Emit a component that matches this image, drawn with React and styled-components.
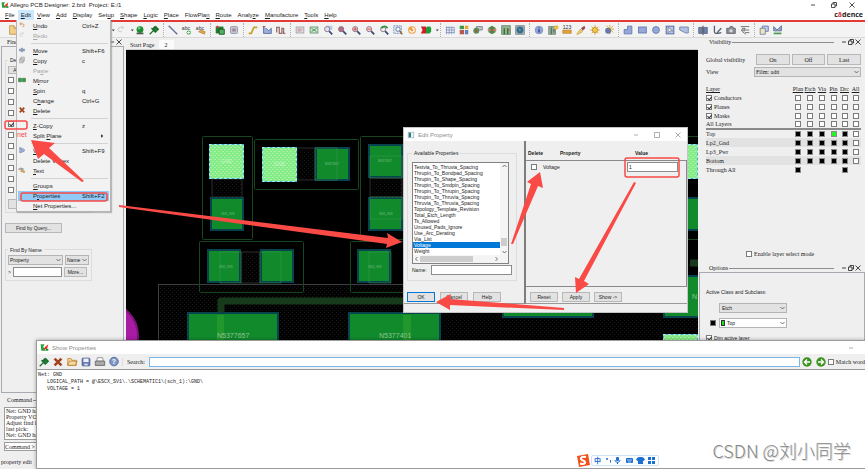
import React, { useState } from 'react'
import styled, { createGlobalStyle, css } from 'styled-components'

const GlobalStyle = createGlobalStyle`
  * { box-sizing: border-box; }
  body {
    margin: 0;
    background: #efeff0;
    overflow: hidden;
  }
  button, input, select { font: inherit; color: inherit; margin: 0; padding: 0; border-radius: 0; outline: 0; }
`

const ui = css`
  font-family: "Liberation Sans", Arial, sans-serif;
  font-size: 6px;
  line-height: 8px;
`
const form = css`
  font-family: "Liberation Sans", Arial, sans-serif;
  font-size: 5px;
  line-height: 6px;
`
const dock = css`
  font-family: "Liberation Serif", serif;
  font-size: 6px;
  line-height: 8px;
`

const Desktop = styled.div`
  position: relative;
  display: flex;
  flex-direction: column;
  height: 100vh;
  overflow: hidden;
  background: #efeff0;
  color: #1c1c1c;
  ${ui}
`
const TitleBar = styled.header`
  display: flex;
  align-items: center;
  gap: 1px;
  height: 10px;
  flex: none;
  padding: 0 6px 0 1px;
  background: #fff;
`
const Title = styled.h1`
  flex: 1;
  margin: 0;
  font-size: 6px;
  font-weight: 400;
  white-space: pre;
`
const WinButton = styled.button`
  display: grid;
  place-items: center;
  width: ${({ $w }) => $w || 20}px;
  height: 8px;
  border: 0;
  background: none;
  color: ${({ $faint }) => ($faint ? '#9a9a9a' : '#222')};
`
const MenuBar = styled.nav`
  display: flex;
  align-items: center;
  height: 10px;
  flex: none;
  padding-left: 2px;
  background: #fff;
`
const MenuButton = styled.button`
  height: 10px;
  padding: 0 3px;
  border: 0;
  background: ${({ $open }) => ($open ? '#cce8ff' : 'none')};
`
const Brand = styled.div`
  margin-left: auto;
  padding-right: 2px;
  font-family: "Open Sans", sans-serif;
  font-size: 7px;
  font-weight: 700;
  i { font-style: normal; color: #d33; }
`
const ToolBar = styled.div`
  display: flex;
  align-items: center;
  height: 18px;
  flex: none;
  padding: 0 6px;
  border-top: 2px solid #e23b36;
  border-bottom: 1px solid #dadada;
  background: #f3f3f3;
`
const ToolGroup = styled.div`
  display: flex;
  align-items: center;
  & + & { margin-left: 2px; padding-left: 2px; border-left: 1px dotted #b0b0b0; }
`
const ToolButton = styled.button`
  display: grid;
  place-items: center;
  width: ${({ $narrow }) => ($narrow ? 5 : 14)}px;
  height: 14px;
  border: 0;
  background: none;
`
const Body = styled.main`
  display: grid;
  grid-template-columns: 126px 1fr 167px;
  flex: 1;
  min-height: 0;
`
const Dock = styled.section`
  display: flex;
  flex-direction: column;
  min-height: 0;
  min-width: 0;
`
const DockHeader = styled.div`
  display: flex;
  align-items: center;
  gap: 1px;
  height: 8px;
  padding: 0 4px 0 ${({ $left }) => $left || 8}px;
  ${dock}
  hr { flex: 1; border: 0; border-top: 1px solid #8d8d8d; margin: 0 6px 0 0; }
`
const Frame = styled.div`
  display: flex;
  flex-direction: column;
  align-items: flex-start;
  flex: 1;
  margin: 0 ${({ $right }) => $right || 0}px 0 1px;
  padding: ${({ $pad }) => $pad || '10px 3px 0'};
  border: 1px solid #a9a9b2;
  ${form}
`
const Group = styled.fieldset`
  width: 86px;
  margin: 0;
  padding: 2px 2px 3px;
  border: 1px solid #dcdcdc;
  legend { padding: 0 2px; height: 6px; }
`
const Row = styled.div`
  display: flex;
  align-items: center;
  gap: ${({ $gap }) => $gap || 0}px;
  height: ${({ $h }) => $h || 9}px;
  margin-top: ${({ $mt }) => $mt || 0}px;
`
const Button = styled.button`
  width: ${({ $w }) => $w}px;
  height: ${({ $h }) => $h || 10}px;
  flex: ${({ $grow }) => ($grow ? 1 : 'none')};
  border: 1px solid ${({ $primary }) => ($primary ? '#0078d7' : '#b8b8b8')};
  background: #e2e2e2;
  white-space: nowrap;
`
const TextBox = styled.input`
  width: ${({ $w }) => $w}px;
  height: ${({ $h }) => $h || 9}px;
  flex: ${({ $grow }) => ($grow ? 1 : 'none')};
  min-width: 0;
  padding: 0 1px;
  border: 1px solid ${({ $blue }) => ($blue ? '#7ab8ea' : '#8c8c8c')};
  background: #fff;
`
const Tick = styled.input.attrs({ type: 'checkbox' })`
  appearance: none;
  display: inline-block;
  position: relative;
  flex: none;
  width: 6px;
  height: 6px;
  vertical-align: middle;
  border: 1px solid #7b7b7b;
  background: #fff;
  &:checked::after {
    content: '';
    position: absolute;
    left: 1px;
    top: 0;
    width: 2px;
    height: 3px;
    border: solid #333;
    border-width: 0 1px 1px 0;
    transform: rotate(40deg);
  }
`
const Swatch = styled(Tick)`
  border-color: #8c8c8c;
  background: ${({ $color }) => $color};
  &:checked::after { display: none; }
`
const TickLabel = styled.label`
  display: flex;
  align-items: center;
  gap: 2px;
  height: ${({ $h }) => $h || 11}px;
  white-space: nowrap;
`
const SelectWrap = styled.span`
  position: relative;
  display: block;
  width: ${({ $w }) => $w}px;
  height: 10px;
  flex: ${({ $w }) => ($w ? 'none' : 1)};
  select {
    appearance: none;
    display: block;
    width: 100%;
    height: 100%;
    padding-left: ${({ $inset }) => $inset || 1}px;
    border: 1px solid #b4b4b4;
    background: ${({ $white }) => ($white ? '#fff' : '#e2e2e2')};
  }
  svg { position: absolute; right: 2px; top: 3px; pointer-events: none; }
`
const ColorChip = styled.i`
  position: absolute;
  left: 2px;
  top: 2px;
  width: 4px;
  height: 6px;
  border: 1px solid #333;
  background: #1fdc1f;
`
const BlackChip = styled.i`
  width: 6px;
  height: 6px;
  border: 1px solid #777;
  background: #000;
`
const Tabs = styled.div`
  display: flex;
  align-items: flex-end;
  height: 12px;
  flex: none;
  border-bottom: 1px solid #cfcfcf;
  ${dock}
`
const Tab = styled.button`
  height: 9px;
  padding: 0 ${({ $active }) => ($active ? 6 : 4)}px;
  border: 0;
  background: ${({ $active }) => ($active ? '#fbfbfb' : 'none')};
`
const Canvas = styled.svg`
  display: block;
  width: 100%;
  flex: 1;
  min-height: 0;
  background: #000;
`
const Visibility = styled.div`
  display: flex;
  flex-direction: column;
  flex: 0 0 218px;
  padding: 8px 4px 6px 8px;
  ${dock}
  button, select { line-height: 6px; }
`
const GlobalLabel = styled.span`
  width: 48px;
  white-space: nowrap;
`
const LayerTable = styled.table`
  table-layout: fixed;
  width: 100%;
  margin-top: 8px;
  border-collapse: collapse;
  line-height: 8px;
  th, td { height: 9px; padding: 0; text-align: center; line-height: 6px; font-weight: 400; }
  thead th { height: 8px; text-decoration: underline; }
  th:first-child { text-align: left; }
  tbody + tbody tr:first-child > * { border-top: 2px solid #8a8a8a; }
  tbody + tbody tr:nth-child(even) { background: #e2e2e2; }
  label { display: flex; align-items: center; gap: 2px; }
`
const Col = styled.col`
  width: ${({ $w }) => $w}px;
`
const LayerMode = styled.div`
  margin-top: auto;
  padding-left: 40px;
`
const CommandDock = styled.section`
  flex: none;
  height: 76px;
  padding: 3px 0 0 4px;
  ${dock}
`
const CommandLog = styled.div`
  height: 33px;
  margin-top: 3px;
  padding: 0 1px;
  border: 1px solid #9d9d9d;
  background: #fff;
  line-height: 6px;
  overflow: hidden;
  p { margin: 0; white-space: nowrap; }
`
const CommandLine = styled.label`
  display: flex;
  align-items: center;
  height: 9px;
  margin-top: 2px;
  border: 1px solid #9d9d9d;
  background: #fff;
  white-space: pre;
  input { flex: 1; height: 7px; border: 0; border-left: 1px solid #777; background: none; }
`
const Status = styled.p`
  margin: 7px 0 0 -3px;
`
const Menu = styled.ul`
  position: absolute;
  left: 16px;
  top: 20px;
  width: 95px;
  margin: 0;
  padding: 1px 1px 0;
  list-style: none;
  border: 1px solid #b5b5b5;
  border-top: 0;
  background: #f2f2f2;
  box-shadow: 1px 1px 1px #8888;
`
const MenuItem = styled.li`
  button {
    display: grid;
    grid-template-columns: 15px 49px 1fr;
    align-items: center;
    width: 100%;
    height: 10px;
    border: 0;
    text-align: left;
    white-space: nowrap;
    color: ${({ $off }) => ($off ? '#a5a5a5' : '#1c1c1c')};
    background: ${({ $hot }) => ($hot ? '#91c9f7' : 'none')};
  }
`
const MenuKeys = styled.span`
  display: flex;
  align-items: center;
  justify-content: ${({ $sub }) => ($sub ? 'flex-end' : 'flex-start')};
  padding-right: ${({ $sub }) => ($sub ? 4 : 0)}px;
`
const MenuRule = styled.li`
  height: 5px;
  padding: 2px 1px 0 13px;
  &::after { content: ''; display: block; border-top: 1px solid #d2d2d2; }
`
const Dialog = styled.section`
  position: absolute;
  left: 403px;
  top: 127px;
  width: 285px;
  background: #efefef;
  border: 1px solid #c4c4c4;
  ${form}
`
const DialogTitle = styled.header`
  display: flex;
  align-items: center;
  gap: 3px;
  height: 13px;
  padding: 0 0 0 3px;
  background: #fff;
  color: #8c8c8c;
  ${ui}
  span { flex: 1; }
`
const Panes = styled.div`
  display: grid;
  grid-template-columns: 120px 1fr;
`
const Pane = styled.div`
  height: 163px;
  padding: ${({ $pad }) => $pad};
  border-left: ${({ $line }) => ($line ? '2px solid #7d7d7d' : 0)};
  border-bottom: 1px solid #999;
`
const PropertyGroup = styled(Group)`
  width: 110px;
  height: 131px;
  padding: 6px 4px;
`
const ListBox = styled.div`
  display: grid;
  grid-template-columns: 1fr 8px;
  grid-template-rows: 92px 8px;
  width: 97px;
  border: 1px solid #828282;
  background: #fff;
`
const Options = styled.ul`
  margin: 0;
  padding: 1px 0;
  list-style: none;
  overflow: hidden;
  li { padding-left: 1px; white-space: nowrap; }
  li[aria-selected='true'] { background: #0078d7; color: #fff; }
`
const ScrollTrack = styled.div`
  display: flex;
  flex-direction: ${({ $down }) => ($down ? 'column' : 'row')};
  align-items: center;
  justify-content: space-between;
  padding: 1px;
  background: #f4f4f4;
`
const Thumb = styled.i`
  width: ${({ $w }) => $w}px;
  height: ${({ $h }) => $h}px;
  margin: ${({ $m }) => $m || 0};
  background: #cdcdcd;
`
const ValueHead = styled.div`
  display: grid;
  grid-template-columns: 32px 75px 1fr;
  height: 19px;
  padding: 9px 2px 0;
  font-weight: 700;
`
const ValueArea = styled.div`
  height: 127px;
  padding: 1px 8px 0 5px;
  border: 1px solid #8a8a8a;
  border-left: 0;
`
const ValueRow = styled.div`
  display: grid;
  grid-template-columns: 1fr 51px;
  align-items: center;
  height: 10px;
  label { display: flex; align-items: center; gap: 6px; }
`
const DialogFoot = styled.div`
  height: 8px;
`
const PropsWindow = styled.section`
  position: absolute;
  left: 36px;
  right: 0;
  top: 340px;
  bottom: 0;
  display: flex;
  flex-direction: column;
  overflow: hidden;
  border: 1px solid #9b9b9b;
  border-right: 0;
  background: #fff;
  box-shadow: 0 0 4px #0005;
`
const PropsBar = styled.div`
  display: flex;
  align-items: center;
  height: 16px;
  flex: none;
  border-bottom: 1px solid #9a9a9a;
  background: #efefef;
  overflow: hidden;
  ${dock}
  & > label { white-space: nowrap; }
`
const SearchLabel = styled.label`
  padding: 0 4px;
  margin-left: 1px;
  border-left: 1px solid #ddd;
`
const Report = styled.pre`
  margin: 0;
  padding: 2px 1px;
  font-family: "Liberation Mono", monospace;
  font-size: 5px;
  line-height: 7px;
`
const Marks = styled.svg`
  position: absolute;
  inset: 0;
  width: 100%;
  height: 100%;
  pointer-events: none;
`
const InputMethod = styled.div`
  position: absolute;
  left: 575px;
  bottom: 1px;
  display: flex;
  align-items: center;
  height: 15px;
`
const InputMethodBar = styled.div`
  display: flex;
  align-items: center;
  gap: 3px;
  height: 11px;
  padding: 0 2px;
  border: 1px solid #cfe2f5;
  border-radius: 2px;
  background: #fff;
  color: #1a6fd0;
  font: 700 7px/9px "Noto Sans CJK SC", sans-serif;
`
const Watermark = styled.div`
  position: absolute;
  right: 14px;
  bottom: 6px;
  color: #858585;
  text-shadow: 1px 1px 0 #d8d8d8;
  font: 300 18px/26px "Noto Sans CJK SC", sans-serif;
`

/* toolbar drawings, all on a 14 x 14 grid */
const lens = (fill) => (
  <>
    <path d="M8 8l4 4" stroke="#3c4a78" strokeWidth="2" />
    <circle cx="6" cy="6" r="3" fill={fill} stroke="#8a6a80" />
  </>
)
const frame = (fill, stroke) => <rect x="2.5" y="3.5" width="9" height="7" fill={fill} stroke={stroke} />
const pin = (
  <path d="M2 12l4-4M4 5l5 5M6 7l3-3M7 3l4 4M6 5l3-2 3 3-3 3z" stroke="#1d6f2c" strokeWidth="1.5" fill="#2f9a42" />
)
const art = {
  file: <path d="M3 2h5l3 3v7H3zM8 2v3h3" fill="#f3cf8c" stroke="#c69445" />,
  redo: <path d="M9 4H6a2.500 2.500 0 0 0 0 5h2M8 2l2 2-2 2" fill="none" stroke="#c3c3c3" />,
  undo: <path d="M4 5h4a2.500 2.500 0 0 1 0 5M6 2L3 5l3 2" fill="none" stroke="#d58a4c" strokeWidth="1.500" />,
  caret: <path d="M5 6h5l-2.500 3z" fill="#333" />,
  sub: <path d="M5 3l5 4-5 4z" fill="#222" />,
  ball: <><path d="M3 10h8v2H3z" fill="#555" /><circle cx="7" cy="6.500" r="4" fill="#1c8c30" /><circle cx="6" cy="5" r="1.500" fill="#6bd07a" /></>,
  pin,
  line: <path d="M2 2l10 10" stroke="#5c6a98" strokeWidth="1.500" />,
  abcAdd: <><text x="1" y="7" fontSize="6" fill="#333">abc</text><circle cx="9" cy="10" r="2.500" fill="#37a046" /><path d="M9 8v4M7 10h4" stroke="#fff" /></>,
  abcEdit: <><text x="1" y="7" fontSize="6" fill="#333">abc</text><path d="M4 9l7 3 1-3-5-2z" fill="#e2a33c" stroke="#8f6220" strokeWidth=".5" /></>,
  place: <><rect x="2" y="3" width="9" height="8" fill="#237d31" /><path d="M6 6h6v6H6z" fill="#55b063" stroke="#174d20" /><circle cx="4" cy="3.500" r="1.500" fill="#d53b32" /></>,
  gray: <><rect x="3" y="3" width="8" height="8" rx="1" fill="#c8ccd8" stroke="#8b8fa0" /><path d="M5 6h4M5 8h4" stroke="#7d4f60" /></>,
  step: <path d="M2 11h3l3-7h4" fill="none" stroke="#c2a429" strokeWidth="2" />,
  slide: <><path d="M3 3v8h9V5l-3 3-3-3" fill="#9bb0dc" stroke="#53699a" /><path d="M2 3h3" stroke="#b33" /></>,
  delay: <path d="M2 10V4h3v7h3V5h2v6h2" fill="none" stroke="#9a6b6b" strokeWidth="1.500" />,
  grid1: <>{frame('#e6dede', '#98a3ad')}<path d="M4 6h6M4 8h5M6 5v4" stroke="#c7949a" /></>,
  grid2: <>{frame('#d4ead7', '#5f8f6b')}<path d="M4 5l6 4M4 9l6-4" stroke="#3d8b4c" /></>,
  zoomFit: <><rect x="5" y="2" width="7" height="5" fill="#b7c7e6" />{lens('#dbe6f6')}</>,
  zoomBox: lens('#b06f86'),
  zoomIn: <>{lens('#f1dcdc')}<path d="M4 6h4M6 4v4" stroke="#c33" /></>,
  zoomOut: <>{lens('#f1dcdc')}<path d="M4 6h4" stroke="#c33" /></>,
  zoomPrev: <>{lens('#e9eef4')}<path d="M4 5c2-3 6-3 7 0" stroke="#2d9040" strokeWidth="2" fill="none" /></>,
  zoomSel: <><rect x="2" y="2" width="9" height="9" fill="#d8e4f2" stroke="#7f93ad" strokeDasharray="2 1" /><circle cx="7" cy="6" r="2.500" fill="#fff" stroke="#536fa5" /><path d="M9 8l3 4" stroke="#8a5a2c" strokeWidth="1.500" /></>,
  refresh: <><circle cx="7" cy="7" r="4.500" fill="#ef9f41" /><path d="M4.500 7A2.500 2.500 0 1 0 7 4.500" fill="none" stroke="#fff" strokeWidth="1.500" /></>,
  view3d: <><path d="M1 3h6v8H1l2-4z" fill="#cd1f25" /><path d="M7 4l2-1h3l1 2v4l-2 2H7z" fill="#1e9a37" /></>,
  mesh: <path d="M2 4h10M2 7h10M2 10h10M3 3v9M6 3v9M9 3v9M12 4v7" stroke="#8094bd" />,
  colors: <><path d="M2 2h5v4H2z" fill="#3a9a4a" /><path d="M8 2h4v4H8z" fill="#e6a834" /><path d="M2 7h5v5H2z" fill="#b9574c" /><path d="M8 7h4v5H8z" fill="#6780b8" /></>,
  shadow: <><path d="M5 3h7v4H5z" fill="#c0c4ca" stroke="#7b8088" /><circle cx="5" cy="8" r="3.500" fill="#5d8d54" /><circle cx="5" cy="8" r="1" fill="#c33" /></>,
  layers: <><path d="M2 9l5-2 5 2-5 3zM2 5l5-3 5 3-5 2z" fill="#4d8a46" /><path d="M2 7h10" stroke="#a5432f" strokeWidth="1.500" /></>,
  section: <><rect x="2" y="2" width="10" height="10" fill="#93b594" stroke="#6d806f" /><path d="M5 5v7M9 5v7" stroke="#28702f" strokeWidth="1.500" /><path d="M8 7h3" stroke="#c33" /></>,
  world: <><rect x="2" y="2" width="10" height="10" fill="#a7b3ad" stroke="#7b8b8b" /><circle cx="7" cy="7" r="4" fill="#39689b" /><path d="M5 5l3 1-1 3z" fill="#5fb360" /></>,
  info: <><circle cx="7" cy="7" r="4.500" fill="#91a4da" stroke="#8393bf" /><path d="M7 4v1M7 6v4" stroke="#263875" strokeWidth="1.500" /></>,
  dimension: <><rect x="2" y="3" width="8" height="9" fill="#98a99b" stroke="#7b8a7e" /><path d="M5 4v8M8 6v4" stroke="#385f3c" /><circle cx="11" cy="4" r="2.500" fill="#efbd37" /></>,
  ruler: <><text x="2" y="6" fontSize="6" fill="#333">123</text><path d="M2 7h10v4H2z" fill="#e2a13b" stroke="#a46d1b" strokeWidth=".5" /></>,
  brush: <><path d="M2 12l4-6 3 3-5 3z" fill="#f0cf54" stroke="#9b8433" strokeWidth=".5" /><path d="M7 5l4-3 1 3-3 3z" fill="#96455b" /></>,
  sun: <><path d="M7 1v12M1 7h12M3 3l8 8M11 3l-8 8" stroke="#dba22b" /><circle cx="7" cy="7" r="3" fill="#f7c94b" stroke="#b98a22" /></>,
  dim: <><path d="M8 1v11M3 6h10M4 2l8 8M12 2l-8 8" stroke="#dba22b" /><circle cx="8" cy="6" r="2" fill="#f7c94b" /><circle cx="6" cy="8" r="3.500" fill="#6879a8" /></>,
  poly: <path d="M2.500 11.500v-5h4v-4h5v9z" fill="#95a8d6" stroke="#6177af" />,
  rect: <rect x="3" y="3.500" width="9" height="7" fill="#95a8d6" stroke="#6177af" />,
  circle: <circle cx="7" cy="7" r="4" fill="#95a8d6" stroke="#6177af" />,
  pick: <><rect x="2.500" y="2.500" width="9" height="9" fill="#b5c4e8" stroke="#4c5f93" /><path d="M5 4v6l2-2 3 0z" fill="#fff" stroke="#334" strokeWidth=".5" /></>,
  cut: <><path d="M2 3.500h10v7H9L2 7z" fill="#b1bfdf" stroke="#6e81ae" /></>,
  flipH: <><path d="M2 4h4v7H2zM8 4h4v7H8z" fill="#7083b1" stroke="#59658a" /><path d="M7 2v11" stroke="#222" /></>,
  drill: <path d="M4 2v7a2 2 0 0 0 4 0l4-4M8 11l4-1" fill="none" stroke="#555e70" strokeWidth="1.500" />,
  camera: <><path d="M2 5h3l1-2h3l1 2h2v6H2z" fill="#8b8f97" stroke="#666" /><circle cx="7" cy="8" r="2" fill="#d7dce4" /></>,
  net: <path d="M2 3h10M4 5h3v3H3zM8 7h4M7 10h5M4 9l4 3" fill="#bbb" stroke="#666" />,
  copy3: <><path d="M5 2.500h7v6H5z" fill="#c2cdec" stroke="#5f72a8" /><path d="M2.500 5h6v7h-6z" fill="#f0e5b5" stroke="#7381a6" /></>,
  wave: <><path d="M2 3l4 4 5-5v6H2z" fill="#8fa2c8" stroke="#5e7093" /><path d="M2 11h9" stroke="#4e9954" strokeWidth="2" /></>,
  move: <path d="M7 2l2 3h3v4H9l-2 3-2-3H2V5h3z" fill="#8b9ab8" />,
  copy: <path d="M5 2h6v7H5zM3 5h6v7H3z" fill="#e3e5e9" stroke="#888" />,
  mirror: <path d="M1 4h5v6H1zM8 4h5v6H8zM6 7h2" fill="#3d9b45" stroke="#28712f" />,
  cross: <path d="M3 3l8 8M11 3l-8 8" stroke="#a3421c" strokeWidth="3" />,
  vertex: <path d="M3 2v10M4 3l7 3v3l-7 3V9l3-2-3-1z" stroke="#6477a5" fill="#a9b7d8" />,
  folder: <path d="M2 11V3h4l1 2h5v6zM2 11l2-5h9l-2 5z" fill="#f6d9a0" stroke="#c28a3c" />,
  save: <><rect x="2.500" y="2.500" width="9" height="9" rx="1" fill="#6a7fb4" stroke="#44568a" /><path d="M4 3h6v4H4z" fill="#eef" /><path d="M5 9h4v2H5z" fill="#dde" /></>,
  print: <><path d="M4 2h6l1 4H3z" fill="#fff" stroke="#888" /><path d="M1.500 6h11v5h-11z" fill="#aaa" stroke="#666" /></>,
  help: <><circle cx="7" cy="6.500" r="5" fill="#7f95c9" stroke="#50639a" /><text x="4.500" y="9.500" fontSize="8" fontWeight="700" fill="#fff">?</text></>,
  prev: <><circle cx="7" cy="7" r="5.500" fill="#3f9222" /><path d="M10.500 7H4M7 4L4 7l3 3" stroke="#fff" strokeWidth="1.500" fill="none" /></>,
  next: <><circle cx="7" cy="7" r="5.500" fill="#3f9222" /><path d="M3.500 7H10M7 4l3 3-3 3" stroke="#fff" strokeWidth="1.500" fill="none" /></>,
  app: <><path d="M1 2h6l-2 4 4 6H2z" fill="#22a53a" /><path d="M13 2L8 6l-3 5 6-2z" fill="#e4342c" /><path d="M9 9h4v3H9z" fill="#1d8a30" /></>,
  dialog: <><rect x="2" y="2" width="10" height="10" fill="#e9f1f4" stroke="#8aa" /><path d="M3 3h4v8H3z" fill="#347a83" /></>,
}
const Icon = ({ name, size = 12 }) => (
  <svg width={size} height={size} viewBox="0 0 14 14" fontFamily="Liberation Sans" aria-hidden="true">{art[name]}</svg>
)
const Chevron = ({ dir = 0 }) => (
  <svg width="5" height="4" viewBox="0 0 5 4" fill="none" stroke="#555" strokeWidth=".8">
    <path d="M.5 1l2 2 2-2" transform={`rotate(${dir} 2.500 2)`} />
  </svg>
)
const WinIcon = ({ kind }) => (
  <svg width="6" height="6" viewBox="0 0 6 6" fill="none" stroke="currentColor" strokeWidth=".8">
    {kind === 'min' && <path d="M1 3h4" />}
    {kind === 'max' && <path d="M.5.5h5v5h-5z" />}
    {kind === 'restore' && <path d="M.5 2h3.500v3.500H.5zM2 2V.5h3.500V4H4" />}
    {kind === 'close' && <path d="M.5.5l5 5M5.500.5l-5 5" />}
  </svg>
)

const Mnemonic = ({ text }) => {
  const at = text.indexOf('&')
  if (at < 0) return text
  return <span>{text.slice(0, at)}<u>{text[at + 1]}</u>{text.slice(at + 2)}</span>
}

const menus = ['&File', '&Edit', '&View', '&Add', '&Display', 'Set&up', '&Shape', '&Logic', '&Place', 'FlowPla&n', '&Route', 'Analy&ze', '&Manufacture', '&Tools', '&Help']
const tools = [
  ['file', 'folder', 'save', 'print', 'move', 'copy', 'cross', 'caret', 'caret', 'redo', 'caret', 'ball', 'pin'],
  ['line', 'abcAdd', 'abcEdit'],
  ['place', 'gray'],
  ['step', 'slide', 'delay'],
  ['grid1', 'grid2', 'zoomFit', 'zoomBox', 'zoomIn', 'zoomOut', 'zoomPrev', 'zoomSel', 'refresh', 'view3d', 'caret'],
  ['mesh', 'colors', 'shadow', 'layers', 'section', 'world'],
  ['info', 'dimension', 'ruler', 'brush', 'sun', 'dim'],
  ['poly', 'rect', 'circle', 'pick', 'cut'],
  ['flipH', 'drill', 'camera', 'net'],
  ['copy3', 'wave'],
]
const editMenu = [
  { text: '&Undo', keys: 'Ctrl+Z', icon: 'undo' },
  { text: '&Redo', icon: 'redo', off: true },
  null,
  { text: '&Move', keys: 'Shift+F6', icon: 'move' },
  { text: '&Copy', keys: 'c', icon: 'copy' },
  { text: 'Pa&ste', off: true },
  { text: 'M&irror', icon: 'mirror' },
  { text: '&Spin', keys: 'q' },
  { text: 'C&hange', keys: 'Ctrl+G' },
  { text: '&Delete', icon: 'cross' },
  null,
  { text: '&Z-Copy', keys: 'z' },
  { text: 'Split &Plane', sub: true },
  null,
  { text: '&Vertex', keys: 'Shift+F9', icon: 'vertex' },
  { text: 'Delete Vert&ex' },
  { text: '&Text', icon: 'abcEdit' },
  null,
  { text: '&Groups' },
  { text: 'P&roperties', keys: 'Shift+F2', hot: true },
  { text: '&Net Properties...' },
]
const findItems = ['Groups', 'Comps', 'Symbols', 'Functions', 'Nets', 'Pins', 'Vias', 'Fingers', 'Clines', 'Lines']
const layerCols = ['Plan', 'Etch', 'Via', 'Pin', 'Drc', 'All']
const properties = [
  'Testvia_To_Thruvia_Spacing', 'Thrupin_To_Bondpad_Spacing', 'Thrupin_To_Shape_Spacing', 'Thrupin_To_Smdpin_Spacing',
  'Thrupin_To_Thrupin_Spacing', 'Thrupin_To_Thruvia_Spacing', 'Thruvia_To_Thruvia_Spacing', 'Topology_Template_Revision',
  'Total_Etch_Length', 'Ts_Allowed', 'Unused_Pads_Ignore', 'Use_Arc_Derating', 'Via_List', 'Voltage', 'Weight',
]

const Picker = ({ label, options, chip, ...rest }) => (
  <SelectWrap {...rest}>
    <select aria-label={label}>{options.map((o) => <option key={o}>{o}</option>)}</select>
    {chip && <ColorChip />}
    <Chevron />
  </SelectWrap>
)

const FindPanel = () => (
  <Dock>
    <DockHeader $left={7}><span>Find</span><hr /><WinIcon kind="min" /><WinIcon kind="close" /></DockHeader>
    <Frame $right={2}>
      <Group>
        <legend>Design Object Find Filter</legend>
        <Row><Button $w={24} $h={8}>All On</Button></Row>
        {findItems.map((name) => (
          <TickLabel key={name}><Tick defaultChecked={name === 'Nets'} />{name}</TickLabel>
        ))}
        <TickLabel><Tick />Rat Ts</TickLabel>
        <Row $mt={4} $h={10}><Button $w={56} aria-label="Filter" /></Row>
      </Group>
      <Row $mt={10} $h={10}><Button $w={57}>Find by Query...</Button></Row>
      <Row $mt={13} $h={35}>
        <Group>
          <legend>Find By Name</legend>
          <Row $gap={2} $h={10}>
            <Picker $w={55} label="Find type" options={['Property']} />
            <Picker $w={24} label="Find mode" options={['Name']} />
          </Row>
          <Row $gap={2} $mt={2} $h={10}>
            <label htmlFor="find-name">&gt;</label>
            <TextBox id="find-name" $w={49} $h={10} />
            <Button $w={23}>More...</Button>
          </Row>
        </Group>
      </Row>
    </Frame>
  </Dock>
)

const pads = [
  [210, 197, 34, 34], [315, 147, 35, 34], [368, 144, 35, 34], [368, 197, 35, 34], [207, 249, 34, 34], [260, 249, 34, 34],
  [357, 249, 34, 34], [187, 312, 92, 40], [348, 312, 93, 40], [502, 275, 92, 43], [663, 275, 60, 43], [664, 197, 40, 34],
]
const outlines = [
  [202, 136, 50, 103], [254, 139, 104, 50], [360, 136, 50, 103], [199, 241, 104, 51], [350, 241, 104, 51], [660, 136, 60, 103],
]
const Board = () => (
  <Canvas>
    <defs>
      <pattern id="dots" width="4" height="4" patternUnits="userSpaceOnUse">
        <rect width="4" height="4" fill="#020202" />
        <path d="M0 0h1v1H0zM2 2h1v1H2z" fill="#151515" />
      </pattern>
      <pattern id="picked" width="4" height="4" patternUnits="userSpaceOnUse">
        <rect width="4" height="4" fill="#84ec86" />
        <path d="M0 1h2v1H0zM2 3h2v1H2z" fill="#aaf2a6" />
      </pattern>
    </defs>
    <g transform="translate(-126 -50)">
      <rect x="158.500" y="284.500" width="800" height="300" fill="url(#dots)" stroke="#3c4044" />
      <path d="M212 179h30v18h-30zM297 148h18v32h-18zM370 178h32v19h-32zM241 252h19v31h-19z" fill="url(#dots)" stroke="#2c2c2c" />
      <path d="M221 352V301h600" fill="none" stroke="#163a1a" strokeWidth="7" strokeLinejoin="round" />
      <path d="M690 263h40" stroke="#163a1a" strokeWidth="7" />
      {outlines.map(([x, y, w, h]) => <rect key={`${x}-${y}`} x={x + 0.5} y={y + 0.5} width={w} height={h} rx="1" fill="none" stroke="#17451f" />)}
      {pads.map(([x, y, w, h]) => <rect key={`${x}-${y}`} x={x + 1} y={y + 1} width={w - 2} height={h - 2} fill="#118a2c" stroke="#08444d" strokeWidth="2" />)}
      {[[209, 144], [262, 147], [663, 144], [663, 334]].map(([x, y]) => (
        <g key={`${x}-${y}`} fill="none">
          <rect x={x + 0.5} y={y + 0.5} width="34" height="34" fill="url(#picked)" stroke="#3fb9c8" />
          <rect x={x + 0.5} y={y + 0.5} width="34" height="34" stroke="#c9f3f0" strokeDasharray="2 3" />
        </g>
      ))}
      <path d="M217 315h7v30h-7zM403 315h8v30h-8z" fill="#3dab2c" opacity=".4" />
      <path d="M220 252h21v31h-21zM260 252h21v31h-21zM315 148h22v32h-22zM370 156h32v22h-32zM370 197h32v22h-32zM369 252h22v31h-22z" fill="none" stroke="#3d9a50" strokeWidth=".5" />
      <circle cx="104" cy="336" r="34" fill="#a81ba5" stroke="#7b1379" strokeWidth="2" />
      <g fontFamily="Liberation Sans" fill="#8fc596" fontSize="7">
        <text x="217" y="338">N5377657</text>
        <text x="379" y="338">N5377401</text>
        <text x="692" y="299">N</text>
      </g>
      <g fontFamily="Liberation Sans" fill="#c9f5c8" fontSize="5">
        <text x="221" y="163">GND</text>
        <text x="274" y="166">GND</text>
      </g>
      <g fontFamily="Liberation Sans" fill="#7fbf89" fontSize="3">
        <text x="221" y="215">VDD_3V3</text>
        <text x="325" y="165">N5377657</text>
        <text x="378" y="162">N5377657</text>
        <text x="379" y="215">VDD_3V3</text>
        <text x="219" y="268">VDD_3V3</text>
        <text x="368" y="268">VDD_3V3</text>
      </g>
    </g>
  </Canvas>
)

const LayerRow = ({ name, tick, color }) => (
  <tr>
    <th scope="row">{tick ? <label><Tick defaultChecked />{name}</label> : name}</th>
    {layerCols.map((col) => {
      if (!color || col === 'All') {
        return <td key={col}>{name !== 'Through All' && <Tick aria-label={`${name} ${col}`} />}</td>
      }
      if (name === 'Through All' && col !== 'Plan' && col !== 'Drc') return <td key={col} />
      const fill = name === 'Top' && col === 'Pin' ? '#21f421' : '#000'
      return <td key={col}><Swatch $color={fill} aria-label={`${name} ${col}`} /></td>
    })}
  </tr>
)

const RightDock = () => (
  <Dock>
    <DockHeader $left={11}><span>Visibility</span><hr /><WinIcon kind="min" /><WinIcon kind="restore" /><WinIcon kind="close" /></DockHeader>
    <Visibility>
      <Row $h={11} $gap={2}>
        <GlobalLabel>Global visibility</GlobalLabel>
        <Button $grow $h={11}>On</Button><Button $grow $h={11}>Off</Button><Button $grow $h={11}>Last</Button>
      </Row>
      <Row $h={10} $mt={2}>
        <GlobalLabel>View</GlobalLabel>
        <Picker label="View" options={['Film: adtt']} />
      </Row>
      <LayerTable>
        <colgroup><Col /><Col $w={12} /><Col $w={12} /><Col $w={12} /><Col $w={11} /><Col $w={11} /><Col $w={11} /></colgroup>
        <thead><tr><th>Layer</th>{layerCols.map((c) => <th key={c}>{c}</th>)}</tr></thead>
        <tbody>
          {['Conductors', 'Planes', 'Masks'].map((n) => <LayerRow key={n} name={n} tick />)}
          <LayerRow name="All Layers" />
        </tbody>
        <tbody>
          {['Top', 'Lp2_Gnd', 'Lp3_Pwr', 'Bottom', 'Through All'].map((n) => <LayerRow key={n} name={n} color />)}
        </tbody>
      </LayerTable>
      <LayerMode><TickLabel $h={8}><Tick />Enable layer select mode</TickLabel></LayerMode>
    </Visibility>
    <DockHeader $left={11}><span>Options</span><hr /><WinIcon kind="min" /><WinIcon kind="restore" /><WinIcon kind="close" /></DockHeader>
    <Frame $pad="16px 3px 0 6px">
      <span>Active Class and Subclass:</span>
      <Row $mt={8} $h={10} $gap={13}><span /><Picker $w={68} $inset={2} label="Class" options={['Etch']} /></Row>
      <Row $mt={5} $h={10} $gap={3}><Row $gap={4}><i /><BlackChip /></Row><Picker $w={68} $inset={7} $white chip label="Subclass" options={['Top']} /></Row>
      <Row $mt={5}><TickLabel><Tick defaultChecked />Dim active layer</TickLabel></Row>
    </Frame>
  </Dock>
)

const EditProperty = () => {
  const [selected, setSelected] = useState('Voltage')
  return (
    <Dialog>
      <DialogTitle>
        <Icon name="dialog" size={8} /><span>Edit Property</span>
        <WinButton $w={18} $faint><WinIcon kind="min" /></WinButton>
        <WinButton $w={18} $faint><WinIcon kind="max" /></WinButton>
        <WinButton $w={18} $faint><WinIcon kind="close" /></WinButton>
      </DialogTitle>
      <Panes>
        <Pane $pad="9px 3px 0">
          <PropertyGroup>
            <legend>Available Properties</legend>
            <ListBox>
              <Options role="listbox" aria-label="Available Properties">
                {properties.map((p) => (
                  <li key={p} role="option" aria-selected={p === selected} onClick={() => setSelected(p)}>{p}</li>
                ))}
              </Options>
              <ScrollTrack $down><Chevron dir={180} /><Thumb $w={6} $h={8} $m="66px 0 0" /><Chevron /></ScrollTrack>
              <ScrollTrack><Chevron dir={90} /><Thumb $w={53} $h={6} $m="0 20px 0 0" /><Chevron dir={270} /></ScrollTrack>
              <ScrollTrack />
            </ListBox>
            <Row $gap={4} $mt={1}>
              <label htmlFor="prop-name">Name:</label>
              <TextBox id="prop-name" $grow $h={10} />
            </Row>
          </PropertyGroup>
          <Row $gap={5} $h={10} $mt={11}>
            <Button $w={28} $primary>OK</Button><Button $w={28}>Cancel</Button><Button $w={28}>Help</Button>
          </Row>
        </Pane>
        <Pane $line $pad="0">
          <ValueHead><span>Delete</span><span>Property</span><span>Value</span></ValueHead>
          <ValueArea>
            <ValueRow>
              <label><Tick />Voltage</label>
              <TextBox defaultValue="1" aria-label="Voltage value" $h={10} />
            </ValueRow>
          </ValueArea>
          <Row $gap={4} $h={10} $mt={5}>
            <i /><Button $w={28}>Reset</Button><Button $w={28}>Apply</Button><Button $w={28}>Show -&gt;</Button>
          </Row>
        </Pane>
      </Panes>
      <DialogFoot />
    </Dialog>
  )
}

const ShowProperties = () => (
  <PropsWindow>
    <DialogTitle>
      <Icon name="app" size={9} /><span>Show Properties</span>
      <WinButton $w={28} $faint><WinIcon kind="min" /></WinButton>
    </DialogTitle>
    <PropsBar>
      {['pin', 'cross', 'folder', 'save', 'print', 'help'].map((n) => (
        <ToolButton key={n} aria-label={n}><Icon name={n} /></ToolButton>
      ))}
      <SearchLabel htmlFor="search">Search:</SearchLabel>
      <TextBox id="search" $grow $blue $h={10} />
      <ToolButton aria-label="Previous"><Icon name="prev" /></ToolButton>
      <ToolButton aria-label="Next"><Icon name="next" /></ToolButton>
      <TickLabel><Tick />Match word</TickLabel>
      <Row $gap={2}><i /></Row>
    </PropsBar>
    <Report>{`Net: GND
   LOGICAL_PATH = @\\ESCX_SV1\\.\\SCHEMATIC1\\(sch_1):\\GND\\
   VOLTAGE = 1`}</Report>
  </PropsWindow>
)

const Annotations = () => (
  <Marks>
    <g fill="#f94a46">
      <path d="M31 140l24 3-6 5 35 33-2 1-38-28-6 5z" />
      <path d="M119 205l269 33-1-5 15 9-16 6 1-4-268-37z" />
      <path d="M540 172l3 16-5-2-25 58h-2l20-60-4-2z" />
      <path d="M636 183l-52 98 5 3-13 9-1-16 4 2 55-97z" />
      <path d="M436 302l15-8-1 5 114 9v2l-114-5v5z" />
      <text x="17" y="137" fontFamily="Liberation Sans" fontSize="7">net</text>
    </g>
    <g fill="none" stroke="#f94a46" strokeWidth="1.500">
      <rect x="5" y="121" width="22" height="8" rx="2" />
      <rect x="21" y="193" width="86" height="8" rx="2" />
      <rect x="625" y="158" width="54" height="19" rx="2" />
    </g>
  </Marks>
)

const App = () => {
  const [open, setOpen] = useState(true)
  return (
    <>
      <GlobalStyle />
      <Desktop>
        <TitleBar>
          <Icon name="app" size={8} />
          <Title>{'Allegro PCB Designer: 2.brd  Project: E:/1'}</Title>
          <WinButton><WinIcon kind="min" /></WinButton>
          <WinButton><WinIcon kind="restore" /></WinButton>
          <WinButton $w={14}><WinIcon kind="close" /></WinButton>
        </TitleBar>
        <MenuBar>
          {menus.map((m) => (
            <MenuButton key={m} $open={open && m === '&Edit'} onClick={() => m === '&Edit' && setOpen(!open)}><Mnemonic text={m} /></MenuButton>
          ))}
          <Brand>c<i>ā</i>dence</Brand>
        </MenuBar>
        <ToolBar>
          {tools.map((group, g) => (
            <ToolGroup key={g}>
              {group.map((n, i) => <ToolButton key={i} $narrow={n === 'caret'} aria-label={n}><Icon name={n} size={n === 'caret' ? 8 : 12} /></ToolButton>)}
            </ToolGroup>
          ))}
        </ToolBar>
        <Body>
          <FindPanel />
          <Dock>
            <Tabs><Tab>Start Page</Tab><Tab $active>2</Tab></Tabs>
            <Board />
          </Dock>
          <RightDock />
        </Body>
        <CommandDock>
          <DockHeader $left={3}><span>Command</span><hr /></DockHeader>
          <CommandLog>
            <p>Net: GND has</p><p>Property VOLTAGE</p><p>Adjust find filter</p><p>last pick:</p><p>Net: GND has</p>
          </CommandLog>
          <CommandLine>{'Command > '}<input /></CommandLine>
          <Status>property edit</Status>
        </CommandDock>
        {open && (
          <Menu>
            {editMenu.map((item, i) => (item ? (
              <MenuItem key={i} $off={item.off} $hot={item.hot}>
                <button disabled={item.off}>
                  <span>{item.icon && <Icon name={item.icon} size={8} />}</span>
                  <Mnemonic text={item.text} />
                  <MenuKeys $sub={item.sub}>{item.keys}{item.sub && <Icon name="sub" size={6} />}</MenuKeys>
                </button>
              </MenuItem>
            ) : <MenuRule key={i} />))}
          </Menu>
        )}
        <EditProperty />
        <ShowProperties />
        <Annotations />
        <InputMethod>
          <svg width="16" height="15" viewBox="0 0 16 15">
            <path d="M2 3l11-2 2 11-11 2z" fill="#f0511e" />
            <path d="M11 4C6 3 4 6 8 7.500S10 12 5 10.500" fill="none" stroke="#fff" strokeWidth="2" />
          </svg>
          <InputMethodBar>
            <span>中</span>
            <svg width="52" height="9" viewBox="0 0 52 9" fill="#1a6fd0">
              <circle cx="3" cy="3" r="1" /><path d="M6 4h1v2l-1 1z" />
              <rect x="12" y="1" width="3" height="4" rx="1" /><path d="M11 4c0 3 5 3 5 0M13.500 6v2" fill="none" stroke="#1a6fd0" />
              <rect x="22" y="2" width="7" height="5" rx="1" /><path d="M23 4h5M24 6h3" stroke="#fff" strokeWidth=".7" />
              <path d="M33 2l2-1h3l2 1 1 2-2 1v3h-5V5l-2-1z" />
              <path d="M44 1h3v3h-3zM48 1h3v3h-3zM44 5h3v3h-3zM48 5h3v3h-3z" />
            </svg>
          </InputMethodBar>
        </InputMethod>
        <Watermark>CSDN @刘小同学</Watermark>
      </Desktop>
    </>
  )
}

export default App
